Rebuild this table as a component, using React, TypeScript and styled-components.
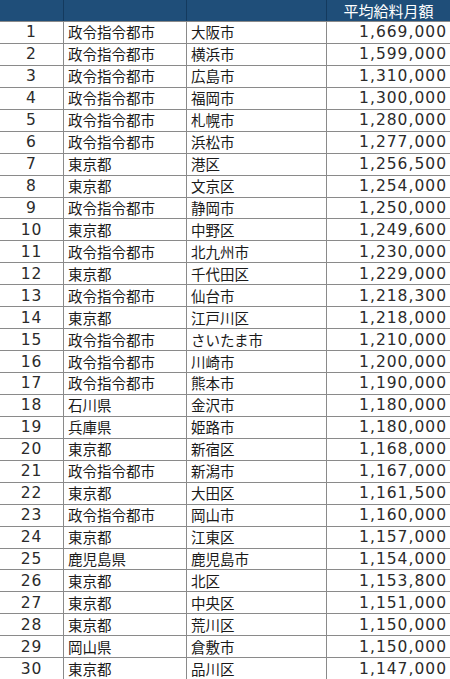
import styled, { createGlobalStyle } from 'styled-components'

const GlobalStyle = createGlobalStyle`
    html, body {
        margin: 0;
        padding: 0;
        background: #ffffff;
    }
`

const Table = styled.div`
    display: flex;
    flex-direction: column;
    width: 450px;
    height: 679px;
    font-family: 'Noto Sans CJK JP', 'Noto Sans', sans-serif;
    color: #1a1a1a;
`

const columns = '64px 123px 140px 123px'

const HeaderRow = styled.div`
    display: grid;
    grid-template-columns: ${columns};
    height: 21px;
    background: #1f4e79;
    color: #ffffff;
`

const HeaderCell = styled.div`
    display: flex;
    align-items: center;
    justify-content: center;
    box-sizing: border-box;
    border-right: 1px solid #143a5e;
    font-size: 15px;
    line-height: 20px;

    &:last-child {
        border-right: none;
    }
`

const Row = styled.div`
    display: grid;
    grid-template-columns: ${columns};
    flex: 1;
    border-top: 1px solid #8a8a8a;
`

const Cell = styled.div<{ $align: 'left' | 'center' | 'right'; $num?: boolean }>`
    display: flex;
    align-items: center;
    justify-content: ${({ $align }) =>
        $align === 'left' ? 'flex-start' : $align === 'right' ? 'flex-end' : 'center'};
    box-sizing: border-box;
    padding: 0 4px;
    border-right: 1px solid #8a8a8a;
    font-family: ${({ $num }) =>
        $num ? "'DejaVu Sans', 'Noto Sans', sans-serif" : "'Noto Sans CJK JP', sans-serif"};
    font-size: ${({ $num }) => ($num ? '15.5px' : '14.5px')};
    letter-spacing: ${({ $num }) => ($num ? '1px' : '0')};
    color: ${({ $num }) => ($num ? '#2b2b2b' : '#1a1a1a')};
    white-space: nowrap;
    line-height: 18px;

    &:last-child {
        border-right: none;
        padding-right: 3px;
    }
`

const rows: [string, string, string][] = [
    ['政令指令都市', '大阪市', '1,669,000'],
    ['政令指令都市', '横浜市', '1,599,000'],
    ['政令指令都市', '広島市', '1,310,000'],
    ['政令指令都市', '福岡市', '1,300,000'],
    ['政令指令都市', '札幌市', '1,280,000'],
    ['政令指令都市', '浜松市', '1,277,000'],
    ['東京都', '港区', '1,256,500'],
    ['東京都', '文京区', '1,254,000'],
    ['政令指令都市', '静岡市', '1,250,000'],
    ['東京都', '中野区', '1,249,600'],
    ['政令指令都市', '北九州市', '1,230,000'],
    ['東京都', '千代田区', '1,229,000'],
    ['政令指令都市', '仙台市', '1,218,300'],
    ['東京都', '江戸川区', '1,218,000'],
    ['政令指令都市', 'さいたま市', '1,210,000'],
    ['政令指令都市', '川崎市', '1,200,000'],
    ['政令指令都市', '熊本市', '1,190,000'],
    ['石川県', '金沢市', '1,180,000'],
    ['兵庫県', '姫路市', '1,180,000'],
    ['東京都', '新宿区', '1,168,000'],
    ['政令指令都市', '新潟市', '1,167,000'],
    ['東京都', '大田区', '1,161,500'],
    ['政令指令都市', '岡山市', '1,160,000'],
    ['東京都', '江東区', '1,157,000'],
    ['鹿児島県', '鹿児島市', '1,154,000'],
    ['東京都', '北区', '1,153,800'],
    ['東京都', '中央区', '1,151,000'],
    ['東京都', '荒川区', '1,150,000'],
    ['岡山県', '倉敷市', '1,150,000'],
    ['東京都', '品川区', '1,147,000'],
]

export default function App() {
    return (
        <>
            <GlobalStyle />
            <Table>
                <HeaderRow>
                    <HeaderCell />
                    <HeaderCell />
                    <HeaderCell />
                    <HeaderCell>平均給料月額</HeaderCell>
                </HeaderRow>
                {rows.map(([group, city, pay], i) => (
                    <Row key={city}>
                        <Cell $align="center" $num>{i + 1}</Cell>
                        <Cell $align="left">{group}</Cell>
                        <Cell $align="left">{city}</Cell>
                        <Cell $align="right" $num>{pay}</Cell>
                    </Row>
                ))}
            </Table>
        </>
    )
}
